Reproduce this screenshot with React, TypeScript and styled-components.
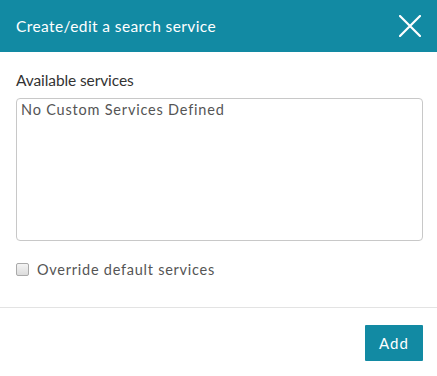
import React from "react";
import styled, { createGlobalStyle } from "styled-components";

const Global = createGlobalStyle`
  html, body { margin: 0; padding: 0; background: #fff; }
  body { font-family: Lato, "Open Sans", sans-serif; }
`;

const Modal = styled.div`
  width: 437px;
  height: 376px;
  display: flex;
  flex-direction: column;
  background: #fff;
`;

const Header = styled.div`
  height: 52px;
  background: #128aa3;
  display: flex;
  align-items: center;
  justify-content: space-between;
  padding: 0 15px 0 16px;
  box-sizing: border-box;
`;

const Title = styled.h1`
  margin: 0;
  font-size: 15.5px;
  font-weight: 400;
  color: #fff;
  letter-spacing: 0.4px;
`;

const Close = styled.button`
  width: 24px;
  height: 24px;
  padding: 0;
  border: 0;
  background: transparent;
  display: flex;
  align-items: center;
  justify-content: center;
  cursor: pointer;
`;

const Body = styled.div`
  padding: 18px 14px 0 16px;
  display: flex;
  flex-direction: column;
`;

const Label = styled.label`
  font-size: 15.5px;
  color: #333;
  line-height: 20px;
  letter-spacing: -0.1px;
  margin-bottom: 8px;
`;

const Area = styled.div`
  height: 143px;
  border: 1px solid #c8c8c8;
  border-radius: 4px;
  box-sizing: border-box;
  padding: 2px 4px;
  font-size: 14.5px;
  color: #555;
  line-height: 18px;
  letter-spacing: 0.8px;
`;

const CheckRow = styled.label`
  display: flex;
  align-items: center;
  gap: 8px;
  margin-top: 20px;
  font-size: 14.5px;
  color: #555;
  letter-spacing: 0.75px;
`;

const Box = styled.span`
  width: 11px;
  height: 11px;
  border: 1px solid #aaa;
  border-radius: 2px;
  background: linear-gradient(#f4f4f4, #dcdcdc);
`;

const Divider = styled.hr`
  margin: 29px 0 0;
  border: 0;
  border-top: 1px solid #e3e3e3;
`;

const Footer = styled.div`
  display: flex;
  justify-content: flex-end;
  padding: 17px 14px 0 0;
`;

const AddButton = styled.button`
  width: 58px;
  height: 36px;
  border: 0;
  border-radius: 1px;
  background: #128aa3;
  color: #fff;
  font-family: Lato, "Open Sans", sans-serif;
  font-size: 15px;
  letter-spacing: 1px;
  cursor: pointer;
`;

export default function App() {
  return (
    <>
      <Global />
      <Modal>
        <Header>
          <Title>Create/edit a search service</Title>
          <Close aria-label="Close">
            <svg width="22" height="22" viewBox="0 0 22 22">
              <path d="M1 1 L21 21 M21 1 L1 21" stroke="#fff" strokeWidth="2.2" strokeLinecap="round" />
            </svg>
          </Close>
        </Header>
        <Body>
          <Label>Available services</Label>
          <Area>No Custom Services Defined</Area>
          <CheckRow>
            <Box />
            Override default services
          </CheckRow>
        </Body>
        <Divider />
        <Footer>
          <AddButton>Add</AddButton>
        </Footer>
      </Modal>
    </>
  );
}
